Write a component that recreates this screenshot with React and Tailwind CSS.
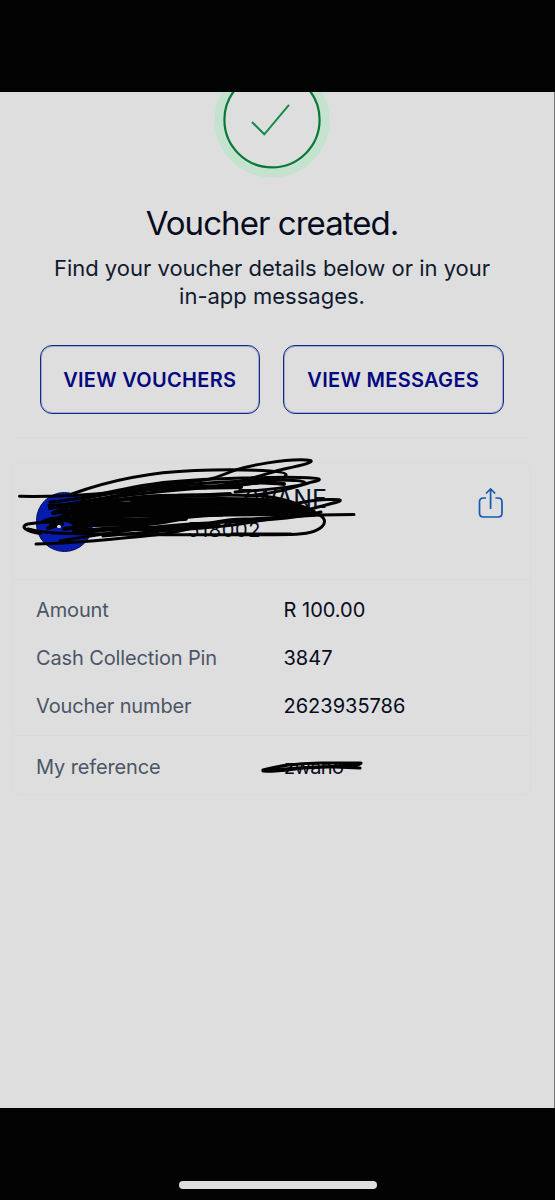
import React from 'react';

const details = [
  { label: 'Amount', value: 'R 100.00' },
  { label: 'Cash Collection Pin', value: '3847' },
  { label: 'Voucher number', value: '2623935786' },
];

function SuccessBadge() {
  return (
    <svg className="block mx-auto" width="116" height="86" viewBox="214 92 116 86" fill="none">
      <circle cx="272" cy="120" r="52.5" stroke="#c4e2ce" strokeWidth="10" />
      <circle cx="272" cy="119.8" r="47.6" stroke="#087a38" strokeWidth="2.2" />
      <path d="M252 122 L264.3 134.3 L289 104.8" stroke="#16894b" strokeWidth="2" />
    </svg>
  );
}

function ShareIcon() {
  return (
    <svg width="26" height="32" viewBox="478 487 26 32" fill="none" stroke="#1458b5" strokeWidth="1.7">
      <path d="M486 498 H483.5 Q479.5 498 479.5 502 V513 Q479.5 517 483.5 517 H498 Q502 517 502 513 V502 Q502 498 498 498 H495.5" />
      <path d="M490.6 509 V489.5 M486 493.5 L490.6 489 L495.2 493.5" />
    </svg>
  );
}

// Marker strokes covering the recipient
function RecipientScribble() {
  return (
    <svg
      className="absolute left-0 top-[-8px] pointer-events-none"
      width="360"
      height="110"
      viewBox="12 454 360 110"
      fill="none"
      stroke="#020202"
      strokeWidth="3"
      strokeLinecap="round"
      strokeLinejoin="round"
    >
      <path d="M19.5 496.3 C70 497 112 494 149 487 S203 484 225 474 S290 459 306 460 S298 466 284 469 S240 484 204 488" />
      <path d="M72 494 C113 479 154 472 195 470.5 S285 470 286 474.5 S269 482 235 485 S120 494 82 502" />
      <path d="M50 502 C90 499 124 486 169 482 S275 477 300 477.5 S322 480 312 482 S290 492 247 496" />
      <path d="M82 499 C135 488 184 484 243 481 S308 482 304 484 S260 491 235 492" />
      <path d="M36 544 C74 544 112 539 155 535 S202 520 245 519 S295 514.5 354 514.5" />
      <path d="M40 533.5 C24 531 20 526 28 524 C43 521 70 523 103 515 S196 508 248 507 S302 500 328 499.5 S333 503 318 507 S274 519 240 524 S151 531 103 536" />
      <path d="M28 529 C49 535 80 533 118 534 S257 535 291 534.5 S329 521 321 516 S303 511 290 503" />
      <path d="M232 534 H291" />
      <path d="M49 505 C103 505 142 495 195 495 S275 493 304 507 S276 512 206 512" />
      <path d="M60 541 C112 532 158 525 208 523 S293 519 321 512" />
      <path d="M50 508 C78 502 105 500 129 493 S211 488 241 487" strokeWidth="4" />
      <path d="M82 505 C122 507 153 502 195 503 S275 503 307 510" strokeWidth="7" />
      <path d="M83 510 C127 509 169 510 214 509 S277 509 312 513" strokeWidth="8" />
      <path d="M83 515 C112 513 151 516 187 515 S237 513 294 514" strokeWidth="5" />
      <path d="M83 519 C102 518 139 521 163 519 S199 514 222 514" strokeWidth="5" />
      <path d="M83 525 C108 522 133 526 157 522 S177 518 185 518" strokeWidth="6" />
      <path d="M88 531 C119 526 145 530 166 528 S199 525 218 525" strokeWidth="5" />
      <path d="M91 502 C119 501 139 496 160 496 S202 496 230 494" strokeWidth="4" />
      <path d="M127 490 C158 489 193 487 222 486 S250 480 284 484" strokeWidth="4" />
      <path d="M132 500 C165 499 188 499 222 499 S272 500 289 502" strokeWidth="4" />
      <path d="M52 507 L75 504 L53 513 L79 510 L56 519 L78 517 M43 522 C54 516 66 519 74 523 M48 528 L62 524 M64 529 L87 526 M51 525 L59 522" strokeWidth="4" />
      <path d="M72 506 L90 507 L75 515 L88 516 L74 523 L90 522 L75 530 L92 531" strokeWidth="6" />
    </svg>
  );
}

function ReferenceScribble() {
  return (
    <svg
      className="absolute left-[-24px] top-[6px] pointer-events-none"
      width="104"
      height="20"
      viewBox="260 758 104 20"
      fill="none"
      stroke="#020202"
      strokeWidth="3.2"
      strokeLinecap="round"
      strokeLinejoin="round"
    >
      <path d="M263 771 C282 766 302 764 321 764 L361 764 C359 768 335 767 316 768 S278 773 263 772 C289 770 315 767 335 768 L360 769" />
    </svg>
  );
}

function OutlineButton({ children }) {
  return (
    <button className="w-[220.5px] h-[69px] rounded-[12px] border border-[#142c83] ring-1 ring-inset ring-[#7189c2]/60 text-[#05087e] text-[20px] font-semibold tracking-[0.3px] whitespace-nowrap">
      {children}
    </button>
  );
}

function App() {
  return (
    <div className="w-[555px] h-[1200px] bg-[#030303] flex flex-col overflow-hidden font-['Inter',sans-serif] text-[#070b20]">
      <div className="h-[92px] shrink-0" />
      <main className="h-[1015.5px] shrink-0 bg-[#dedede] border-r border-[#777777] pl-[12px] pr-[23px]">
        <div className="pl-[1px]">
          <SuccessBadge />
          <h1 className="mt-[23px] text-center text-[33px] leading-[44px] font-normal tracking-[-0.95px]">Voucher created.</h1>
          <p className="mt-[9px] text-center text-[22px] leading-[28px] text-[#101a2e] whitespace-nowrap">
            Find your voucher details below or in your
            <br />
            in-app messages.
          </p>
        </div>
        <div className="mt-[35px] pl-[27.5px] flex gap-[23px]">
          <OutlineButton>VIEW VOUCHERS</OutlineButton>
          <OutlineButton>VIEW MESSAGES</OutlineButton>
        </div>
        <div className="mt-[23px] h-px bg-[#dadadb]" />

        <section className="mt-[24px] w-[519px] h-[333px] rounded-[6px] ring-1 ring-inset ring-[#dbdbdc]">
          <div className="relative h-[117px] pl-[24px] pr-[27px] flex">
            <div className="mt-[30px] w-[57px] h-[60px] shrink-0 rounded-full bg-[#061cae] border border-[#070d4b] flex items-center justify-center" />
            <div className="mt-[23px] w-[234px] text-right whitespace-nowrap">
              <div className="text-[25px] leading-[28px] text-[#071127]">ZWANE</div>
              <div className="mr-[66px] text-[20px] leading-[34px] tracking-[0.6px]">518002</div>
            </div>
            <div className="ml-auto mt-[25px]">
              <ShareIcon />
            </div>
            <RecipientScribble />
            <div className="absolute left-[45px] top-[63px] w-[4px] h-[3px] rounded-full bg-[#bdd9ff]" />
          </div>
          <div className="h-px bg-[#dadadb]" />
          <dl className="pt-[6px] h-[155px] text-[20px] leading-[48px]">
            {details.map((row) => (
              <div key={row.label} className="flex pl-[24px]">
                <dt className="w-[247.5px] text-[#4b5566] tracking-[-0.13px]">{row.label}</dt>
                <dd>{row.value}</dd>
              </div>
            ))}
          </dl>
          <div className="h-px bg-[#dadadb]" />
          <div className="flex pl-[24px] pt-[15px] text-[20px] leading-[32px]">
            <div className="w-[248px] text-[#4b5566] tracking-[-0.13px]">My reference</div>
            <div className="relative tracking-[-0.6px]">
              zwano
              <ReferenceScribble />
            </div>
          </div>
        </section>
      </main>
      <footer className="flex-1 flex items-end justify-center pb-[11px]">
        <div className="w-[198px] h-[8px] rounded-full bg-[#dedede]" />
      </footer>
    </div>
  );
}

export default App;
